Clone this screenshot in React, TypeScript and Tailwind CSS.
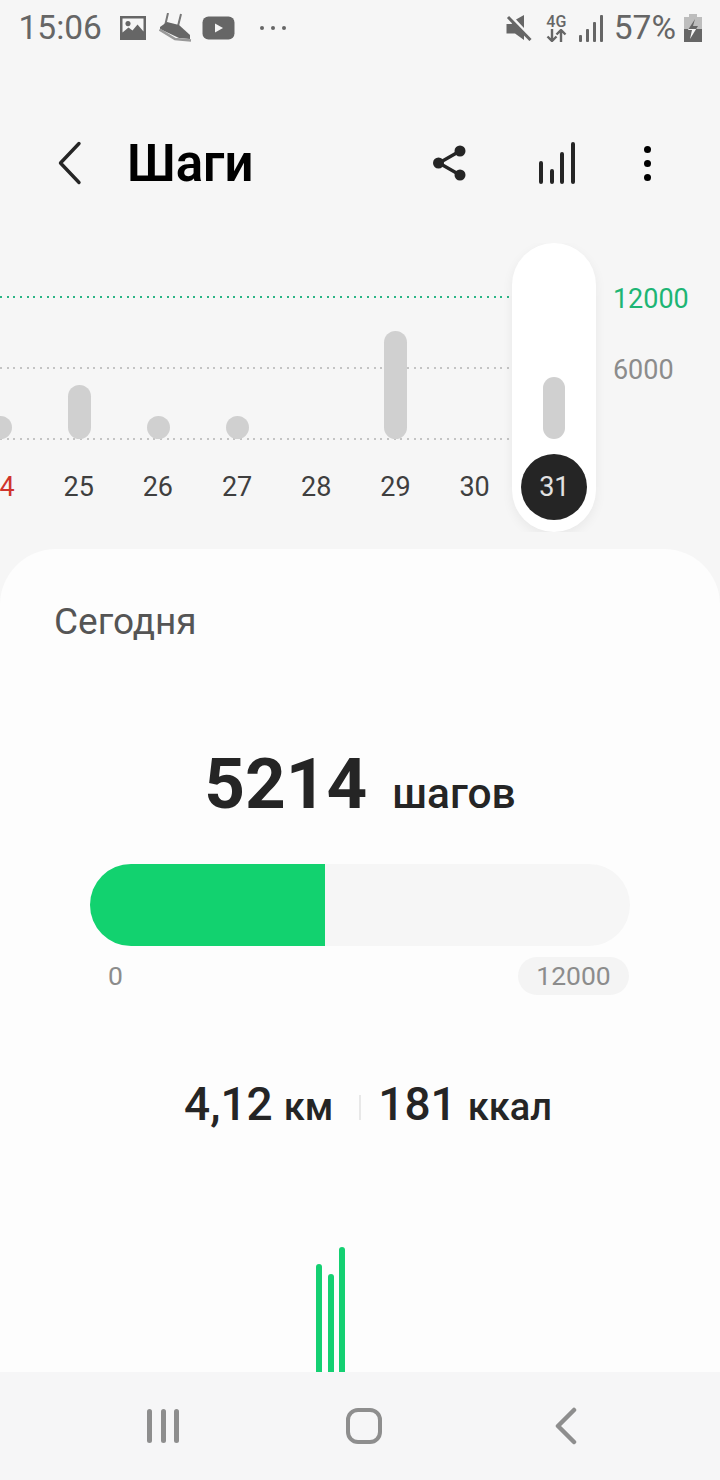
const days = [
  { label: "24", bar: "h-[23px]", color: "text-[#d0342c]" },
  { label: "25", bar: "h-[54px]", color: "text-[#3f3f3f]" },
  { label: "26", bar: "h-[23px]", color: "text-[#3f3f3f]" },
  { label: "27", bar: "h-[23px]", color: "text-[#3f3f3f]" },
  { label: "28", bar: "", color: "text-[#3f3f3f]" },
  { label: "29", bar: "h-[108px]", color: "text-[#3f3f3f]" },
  { label: "30", bar: "", color: "text-[#3f3f3f]" },
];

function StatusBar() {
  return (
    <div className="flex h-[56px] items-center text-[#666666]">
      <span className="ml-[18.5px] w-[83.5px] text-[33.5px] leading-none font-normal">15:06</span>
      <svg className="ml-[17px]" width="28" height="26" viewBox="0 0 28 26">
        <path
          fillRule="evenodd"
          fill="#666666"
          d="M1 1h26v24H1zM3.5 3.5v14l6-5 4 3 5-6 6 7v-13zM9 6a2.6 2.6 0 1 1-.01 0z"
        />
      </svg>
      <svg className="ml-[12px]" width="33" height="30" viewBox="0 0 33 30">
        <path d="M9 0 6 13M22 1l-3 12" fill="none" stroke="#777777" strokeWidth="2" />
        <path d="M1 14 8 9 20 12 31 22 31 26 20 25 1 16z" fill="#666666" />
        <path d="M0.5 16.5 16 26l16 1.5" fill="none" stroke="#999999" strokeWidth="2.6" />
      </svg>
      <svg className="ml-[10px]" width="33" height="24" viewBox="0 0 33 24">
        <rect x="0.5" y="0.5" width="32" height="23" rx="6" fill="#666666" />
        <path d="M13 7.5v9l8-4.5z" fill="#f6f6f6" />
      </svg>
      <div className="ml-[25px] flex gap-[7px]">
        <span className="h-[4px] w-[4px] rounded-full bg-[#666666]" />
        <span className="h-[4px] w-[4px] rounded-full bg-[#666666]" />
        <span className="h-[4px] w-[4px] rounded-full bg-[#666666]" />
      </div>

      <svg className="ml-auto" width="26" height="26" viewBox="0 0 26 26">
        <path d="M0.5 9h5l2-2L19 18l-1 0v7l-9-6.5H0.5zM10 4.5 18 0v13z" fill="#666666" />
        <path d="M2 2 24.5 25" stroke="#666666" strokeWidth="3" />
      </svg>
      <div className="ml-[14px] flex w-[21px] flex-col items-center">
        <span className="text-[16px] leading-[15px] font-medium">4G</span>
        <svg width="21" height="13" viewBox="0 0 21 13">
          <path d="M6 0v12M1.5 7.5 6 12l4.5-4.5M15 13V1M10.5 5.5 15 1l4.5 4.5" fill="none" stroke="#666666" strokeWidth="2.4" />
        </svg>
      </div>
      <svg className="ml-[12px]" width="24" height="27" viewBox="0 0 24 27">
        <g fill="#666666">
          <rect x="0" y="20" width="3" height="7" rx="1" />
          <rect x="7" y="14" width="3" height="13" rx="1" />
          <rect x="14" y="7" width="3" height="20" rx="1" />
          <rect x="21" y="0" width="3" height="27" rx="1" />
        </g>
      </svg>
      <span className="ml-[11px] text-[33.5px] leading-none font-normal">57%</span>
      <svg className="mr-[18px] ml-[8px]" width="18" height="28" viewBox="0 0 18 28">
        <path d="M5 0h8v3h5v25H0V3h5z" fill="#bdbdbd" />
        <path d="M0 15h18v13H0z" fill="#666666" />
        <path d="M11 5 4.6 15H12.15L14 12H9z" fill="#666666" />
        <path d="M4.6 15 4 16H8L6 25 12.15 15z" fill="#f6f6f6" />
      </svg>
    </div>
  );
}

function Header() {
  return (
    <div className="mt-[67px] mb-[40px] flex h-[80px] items-center">
      <svg className="ml-[57px]" width="25" height="44" viewBox="0 0 25 44">
        <path d="M22 2.5 3.5 22 22 41.5" fill="none" stroke="#252525" strokeWidth="3.4" strokeLinecap="round" strokeLinejoin="round" />
      </svg>
      <h1 className="ml-[45px] text-[51px] leading-none font-semibold text-black">Шаги</h1>
      <svg className="ml-auto" width="33" height="38" viewBox="0 0 33 38">
        <path d="M27 7 6 19l21 12" fill="none" stroke="#252525" strokeWidth="3.4" />
        <circle cx="27" cy="7" r="5.5" fill="#252525" />
        <circle cx="5.5" cy="19" r="5.5" fill="#252525" />
        <circle cx="27" cy="31" r="5.5" fill="#252525" />
      </svg>
      <svg className="ml-[72px]" width="38" height="42" viewBox="0 0 38 42">
        <g stroke="#252525" strokeWidth="4" strokeLinecap="round">
          <path d="M3 21v19M14 29v11M24 12v28M35 2v38" />
        </g>
      </svg>
      <div className="mr-[69px] ml-[68px] flex flex-col gap-[7px]">
        <span className="h-[7px] w-[7px] rounded-full bg-black" />
        <span className="h-[7px] w-[7px] rounded-full bg-black" />
        <span className="h-[7px] w-[7px] rounded-full bg-black" />
      </div>
    </div>
  );
}

function Chart() {
  return (
    <div className="relative mb-[17px] h-[289px] overflow-hidden">
      <div className="absolute top-[53px] left-0 h-[2px] w-[510px] bg-[repeating-linear-gradient(90deg,#2bb585_0_2px,transparent_2px_6.67px)]" />
      <div className="absolute top-[124px] left-0 h-[2px] w-[510px] bg-[repeating-linear-gradient(90deg,#c4c4c4_0_2px,transparent_2px_6.67px)]" />
      <div className="absolute top-[195px] left-0 h-[2px] w-[510px] bg-[repeating-linear-gradient(90deg,#c4c4c4_0_2px,transparent_2px_6.67px)]" />
      <div className="absolute top-0 left-[512px] h-[289px] w-[84px] rounded-full bg-white shadow-[0_4px_12px_rgba(0,0,0,0.06)]" />

      <div className="relative ml-[-39.6px] flex">
        {days.map((day) => (
          <div key={day.label} className="flex w-[79.2px] flex-col items-center">
            <div className="flex h-[196px] items-end">
              {day.bar && <div className={`w-[23px] rounded-full bg-[#d0d0d0] ${day.bar}`} />}
            </div>
            <div className={`mt-[15px] flex h-[66px] items-center pr-[1px] text-[27px] ${day.color}`}>{day.label}</div>
          </div>
        ))}
        <div className="flex w-[79.2px] flex-col items-center">
          <div className="flex h-[196px] items-end">
            <div className="h-[62px] w-[22px] rounded-full bg-[#d0d0d0]" />
          </div>
          <div className="mt-[15px] flex h-[66px] w-[66px] items-center justify-center rounded-full bg-[#252525] text-[27px] text-[#e2e2e2]">
            31
          </div>
        </div>
        <div className="ml-[19px] flex flex-col gap-[41px] pt-[41px] text-[27px] leading-[30px]">
          <span className="text-[#1db574]">12000</span>
          <span className="text-[#8c8c8c]">6000</span>
        </div>
      </div>
    </div>
  );
}

function Card() {
  return (
    <div className="flex flex-1 flex-col overflow-hidden rounded-t-[56px] bg-[#fdfdfd]">
      <p className="mt-[53px] ml-[54px] text-[37px] leading-[40px] text-[#555555]">Сегодня</p>

      <div className="mt-[98px] flex h-[88px] items-baseline justify-center">
        <span className="text-[71px] leading-[88px] font-bold text-[#252525]">5214</span>
        <span className="ml-[25px] text-[42.5px] font-medium text-[#252525]">шагов</span>
      </div>

      <div className="mx-[90px] mt-[36px] flex h-[82px] overflow-hidden rounded-full bg-[#f6f6f6]">
        <div className="h-full w-[235px] bg-[#12d26f]" />
      </div>
      <div className="mt-[11px] ml-[108px] flex h-[38px] w-[521px] items-center justify-between text-[26.5px] text-[#8c8c8c]">
        <span>0</span>
        <span className="flex h-[38px] w-[111px] items-center justify-center rounded-full bg-[#f4f4f4]">12000</span>
      </div>

      <div className="mt-[79px] ml-[184px] flex h-[60px] items-baseline text-[#252525]">
        <span className="text-[46px] leading-[60px] font-medium">4,12</span>
        <span className="ml-[11px] text-[38px] font-medium">км</span>
        <span className="mr-[17px] ml-[26px] h-[25px] w-[2px] bg-[#e8e8e8]" />
        <span className="text-[46px] leading-[60px] font-medium">181</span>
        <span className="ml-[11px] text-[38px] font-medium">ккал</span>
      </div>

      <div className="mt-auto ml-[316px] flex items-end gap-[5.5px]">
        <div className="h-[108px] w-[6px] rounded-t-full bg-[#14d072]" />
        <div className="h-[98px] w-[6px] rounded-t-full bg-[#14d072]" />
        <div className="h-[125px] w-[6px] rounded-t-full bg-[#14d072]" />
      </div>
    </div>
  );
}

function NavBar() {
  return (
    <div className="flex h-[108px] items-center bg-[#f6f6f7]">
      <div className="ml-[147px] flex gap-[8.5px]">
        <span className="h-[34px] w-[5px] rounded-full bg-[#8e8e8e]" />
        <span className="h-[34px] w-[5px] rounded-full bg-[#8e8e8e]" />
        <span className="h-[34px] w-[5px] rounded-full bg-[#8e8e8e]" />
      </div>
      <div className="ml-[167px] h-[36px] w-[36px] rounded-[12px] border-[4px] border-[#8e8e8e]" />
      <svg className="ml-[172px]" width="24" height="38" viewBox="0 0 24 38">
        <path d="M20 3 4 19l16 16" fill="none" stroke="#8e8e8e" strokeWidth="4.5" strokeLinecap="round" strokeLinejoin="round" />
      </svg>
    </div>
  );
}

export default function App() {
  return (
    <div className="flex h-[1480px] w-[720px] flex-col overflow-hidden bg-[#f6f6f6] font-['Roboto',sans-serif]">
      <StatusBar />
      <Header />
      <Chart />
      <Card />
      <NavBar />
    </div>
  );
}
